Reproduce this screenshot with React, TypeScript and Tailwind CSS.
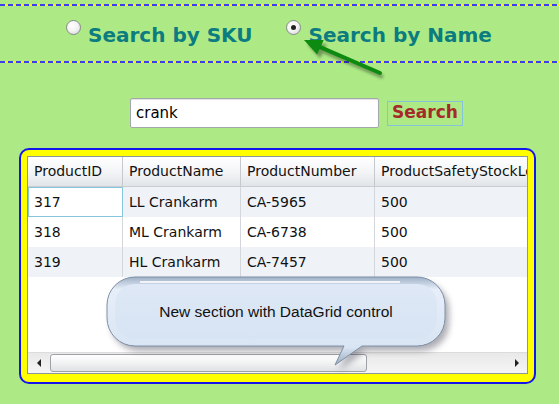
import React from "react";

const rows = [
  { id: "317", name: "LL Crankarm", num: "CA-5965", stock: "500" },
  { id: "318", name: "ML Crankarm", num: "CA-6738", stock: "500" },
  { id: "319", name: "HL Crankarm", num: "CA-7457", stock: "500" },
];

function Radio({ checked }: { checked?: boolean }) {
  return (
    <div className="w-[15px] h-[15px] rounded-full border border-[#8a8a8a] bg-[radial-gradient(circle_at_40%_35%,#ffffff_0%,#f4f4f4_45%,#cfd3d8_100%)] flex items-center justify-center shrink-0">
      {checked && <div className="w-[5px] h-[5px] rounded-full bg-[#222]" />}
    </div>
  );
}

function Dashes() {
  return <div className="h-[2px] w-full bg-[repeating-linear-gradient(90deg,#3c3cf0_0px,#3c3cf0_5px,#f4f400_5px,#f4f400_8px)]" />;
}

const calloutPath =
  "M35 7 H317 A28 28 0 0 1 345 35 V48 A28 28 0 0 1 317 76 H262 L235 95 L244 76 H35 A28 28 0 0 1 7 48 V35 A28 28 0 0 1 35 7 Z";

export default function App() {
  return (
    <div className="relative w-[559px] h-[404px] overflow-hidden bg-[#adea85] font-['DejaVu_Sans',sans-serif]">
      <div className="h-[4px]" />
      <Dashes />
      {/* radio row */}
      <div className="h-[55px] flex items-start pt-[14px] pl-[66px]">
        <Radio />
        <div className="ml-[7px] mt-[3px] text-[20px] leading-[24px] font-bold text-[#0b7c80]">Search by SKU</div>
        <div className="ml-[33px]">
          <Radio checked />
        </div>
        <div className="ml-[8px] mt-[3px] text-[20px] leading-[24px] font-bold text-[#0b7c80]">Search by Name</div>
      </div>
      <Dashes />

      {/* search row */}
      <div className="mt-[35px] flex items-center gap-[8px] pl-[130px]">
        <div className="w-[249px] h-[30px] bg-white border border-[#a3a8ad] rounded-[2px] shadow-[inset_0_1px_1px_rgba(0,0,0,0.12)] flex items-center pl-[5px] text-[15px] text-black">
          crank
        </div>
        <div className="w-[76px] h-[25px] border border-[#86c2dc] flex items-center justify-center text-[17px] font-bold text-[#a52a2a]">
          Search
        </div>
      </div>

      {/* datagrid */}
      <div className="mt-[20px] ml-[19px] w-[517px] h-[236px] rounded-[10px] border-2 border-[#1414ee] bg-[#ffff00] pt-[6px] px-[6px] pb-[8px]">
        <div className="w-full h-full border border-[#8e959c] bg-white flex flex-col text-[14px] text-[#111] overflow-hidden">
          <div className="h-[30px] flex border-b border-[#c9ccd1] bg-[linear-gradient(#ffffff,#f4f5f7_50%,#e1e4e8)] shrink-0">
            <div className="w-[95px] border-r border-[#c5c8cd] flex items-center pl-[6px]">ProductID</div>
            <div className="w-[118px] border-r border-[#c5c8cd] flex items-center pl-[6px]">ProductName</div>
            <div className="w-[134px] border-r border-[#c5c8cd] flex items-center pl-[6px]">ProductNumber</div>
            <div className="flex-1 flex items-center pl-[6px] whitespace-nowrap overflow-hidden">ProductSafetyStockLe</div>
          </div>
          {rows.map((r, i) => (
            <div key={r.id} className={`h-[30px] flex shrink-0 ${i % 2 === 0 ? "bg-[#eff3f8]" : "bg-white"}`}>
              <div className={`w-[95px] flex items-center ${i === 0 ? "pl-[5px] bg-white border border-[#86c6dc]" : "pl-[6px] border-r border-[#d3d7dc]"}`}>{r.id}</div>
              <div className="w-[118px] border-r border-[#d3d7dc] flex items-center pl-[6px]">{r.name}</div>
              <div className="w-[134px] border-r border-[#d3d7dc] flex items-center pl-[6px]">{r.num}</div>
              <div className="flex-1 flex items-center pl-[6px]">{r.stock}</div>
            </div>
          ))}
          <div className="flex-1" />
          {/* horizontal scrollbar */}
          <div className="h-[21px] shrink-0 flex items-center border-t border-[#dcdcdc] bg-[linear-gradient(#e9e9e9,#f5f5f5)]">
            <div className="w-[21px] flex justify-center">
              <div className="w-0 h-0 border-y-[4px] border-y-transparent border-r-[4px] border-r-[#222]" />
            </div>
            <div className="w-[317px] h-[18px] ml-[1px] rounded-[3px] border border-[#9ea2a6] bg-[linear-gradient(#ffffff,#f1f2f3_50%,#dfe1e3)]" />
            <div className="flex-1" />
            <div className="w-[21px] flex justify-center">
              <div className="w-0 h-0 border-y-[4px] border-y-transparent border-l-[4px] border-l-[#222]" />
            </div>
          </div>
        </div>
      </div>

      {/* green arrow */}
      <svg className="absolute left-[295px] top-[30px]" width="95" height="52" viewBox="0 0 95 52">
        <defs>
          <filter id="ash" x="-20%" y="-20%" width="140%" height="140%">
            <feGaussianBlur stdDeviation="1.5" />
          </filter>
        </defs>
        <g transform="translate(3,4)" opacity="0.35" filter="url(#ash)">
          <line x1="85" y1="43" x2="24" y2="16.6" stroke="#000" strokeWidth="4" />
          <polygon points="9,10 28.7,10 22.1,24.6" fill="#000" />
        </g>
        <line x1="85" y1="43" x2="24" y2="16.6" stroke="#0d8a10" strokeWidth="4" strokeLinecap="round" />
        <polygon points="9,10 28.7,10 22.1,24.6" fill="#0d8a10" />
      </svg>

      {/* callout */}
      <svg className="absolute left-[100px] top-[270px]" width="362" height="105" viewBox="0 0 362 105">
        <defs>
          <linearGradient id="cfill" x1="0" y1="0" x2="0" y2="1">
            <stop offset="0" stopColor="#9fb0c6" />
            <stop offset="0.14" stopColor="#e6eef9" />
            <stop offset="0.8" stopColor="#d9e5f3" />
            <stop offset="1" stopColor="#9aabc0" />
          </linearGradient>
          <linearGradient id="cin" x1="0" y1="0" x2="0" y2="1">
            <stop offset="0" stopColor="#dee8f6" />
            <stop offset="1" stopColor="#d7e4f3" />
          </linearGradient>
          <filter id="csh" x="-10%" y="-20%" width="120%" height="150%">
            <feGaussianBlur stdDeviation="3" />
          </filter>
        </defs>
        <path transform="translate(4,5)" opacity="0.4" filter="url(#csh)" d={calloutPath} fill="#334" />
        <path d={calloutPath} fill="url(#cfill)" stroke="#7f90a6" strokeWidth="1" />
        <rect x="15" y="14" width="322" height="55" rx="20" fill="url(#cin)" />
        <path d="M40 12 H300" stroke="#ffffff" strokeWidth="2" opacity="0.8" />
      </svg>
      <div className="absolute left-[107px] top-[277px] w-[338px] h-[69px] flex items-center justify-center font-['Liberation_Sans',sans-serif] text-[15.5px] text-[#111]">
        New section with DataGrid control
      </div>
    </div>
  );
}
